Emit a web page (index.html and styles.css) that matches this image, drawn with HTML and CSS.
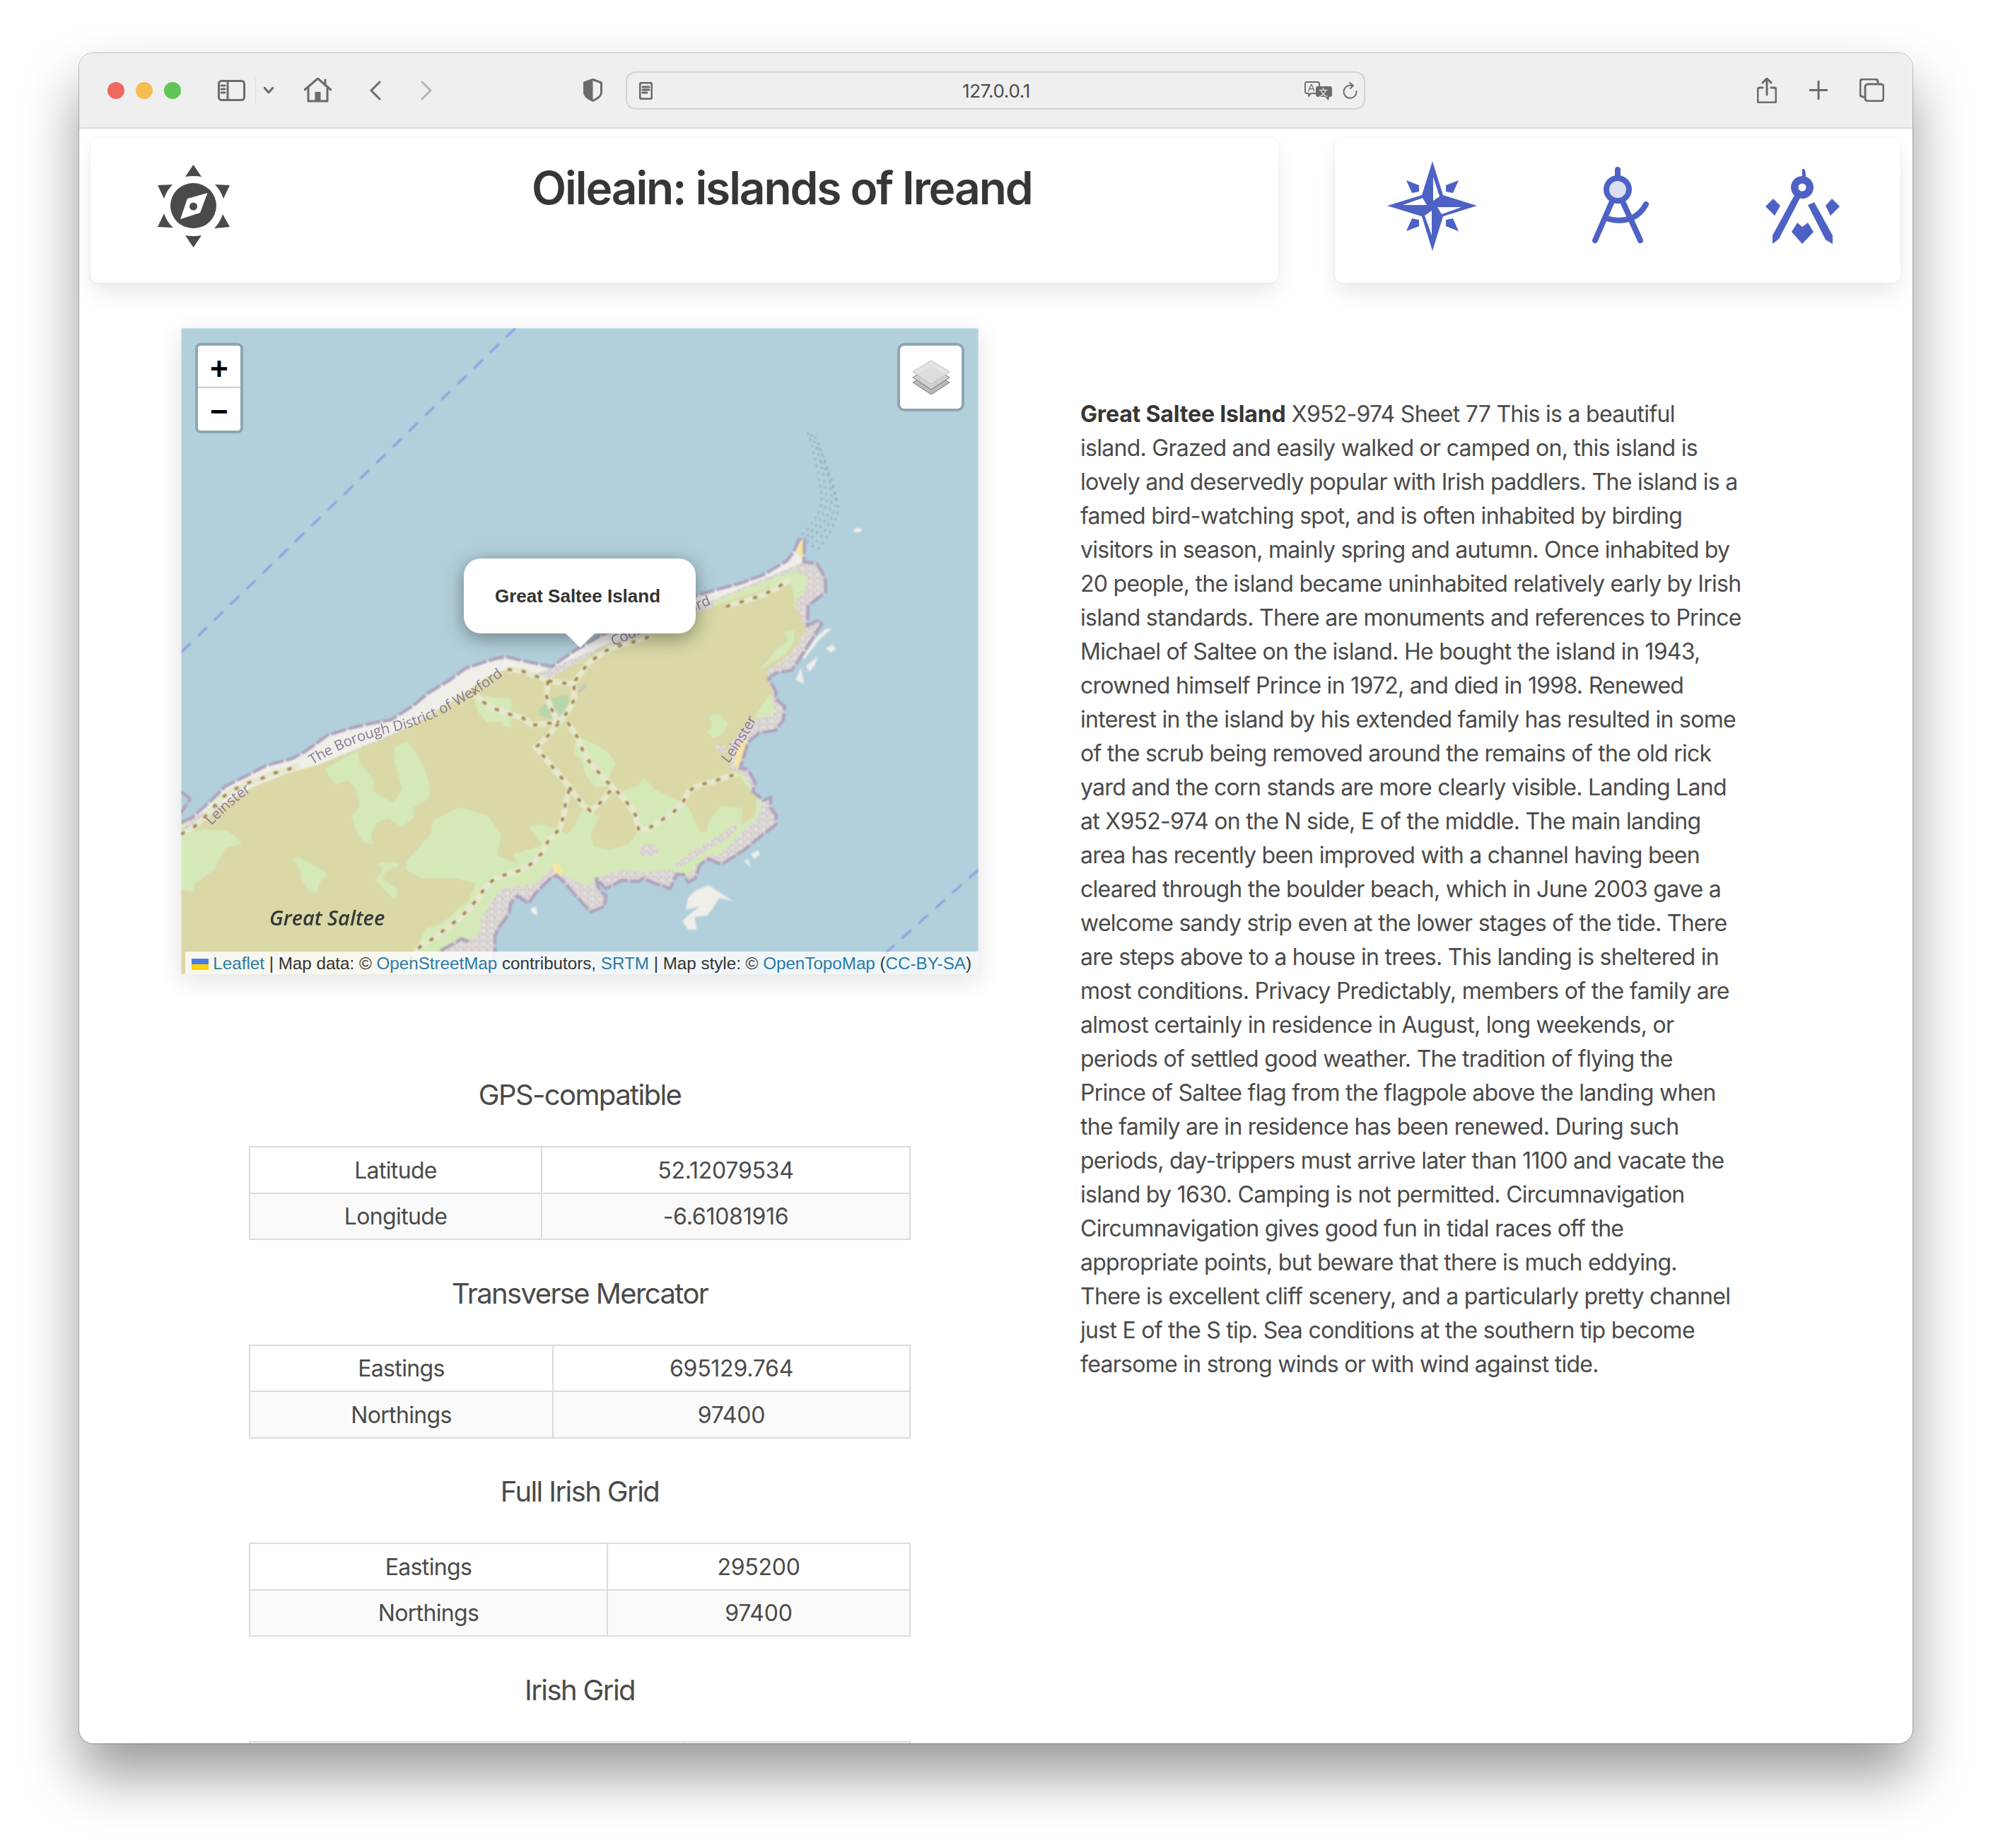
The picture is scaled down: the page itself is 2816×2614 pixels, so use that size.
FILE: index.html
```html
<!DOCTYPE html>
<html lang="en">
<head>
    <meta charset="UTF-8">
    <meta name="viewport" content="width=device-width, initial-scale=1.0">
    <title>Oileain: islands of Ireand</title>
    <link rel="stylesheet" href="styles.css">
</head>
<body>
    <div class="window">
        <!-- Browser toolbar -->
        <header class="toolbar">
            <div class="lights">
                <span class="light light-red"></span>
                <span class="light light-yellow"></span>
                <span class="light light-green"></span>
            </div>
            <svg class="tb-sidebar" width="39" height="30" viewBox="0 0 39 30">
                <rect x="1.5" y="1.5" width="36" height="27" rx="4" class="tb-line"/>
                <path d="M14 2v26M5 8h5M5 13h5M5 18h5" class="tb-line"/>
            </svg>
            <span class="tb-sep"></span>
            <svg class="tb-chevron" width="14" height="9" viewBox="0 0 14 9">
                <path d="M1 1l6 7 6-7" class="tb-line"/>
            </svg>
            <svg class="tb-home" width="39" height="35" viewBox="0 0 39 35">
                <path d="M1 17L19.5 1 38 17M6 13v20h27V13M30 3v8" class="tb-line"/>
                <rect x="15.5" y="20" width="8" height="13" class="tb-fill"/>
            </svg>
            <svg class="tb-back" width="16" height="28" viewBox="0 0 16 28">
                <path d="M14 2L2 14l12 12" class="tb-line"/>
            </svg>
            <svg class="tb-forward" width="16" height="28" viewBox="0 0 16 28">
                <path d="M2 2l12 12L2 26" class="tb-line tb-dim"/>
            </svg>
            <svg class="tb-shield" width="27" height="33" viewBox="0 0 27 33">
                <path d="M13.5 1.5L25.5 6v14q0 6-12 11.5Q1.500 26 1.500 20V6z" class="tb-line"/>
                <path d="M13.500 1.500L1.500 6v14q0 6 12 11.500z" class="tb-fill"/>
            </svg>
            <div class="urlbar">
                <svg class="url-page" width="19" height="25" viewBox="0 0 19 25">
                    <rect x="1" y="1" width="17" height="23" rx="3" class="tb-line"/>
                    <path d="M5 7h9M5 11h9M5 15h6" class="tb-line"/>
                </svg>
                <span class="url-text">127.0.0.1</span>
                <svg class="url-translate" width="39" height="27" viewBox="0 0 39 27">
                    <path d="M3 1h15q3 0 3 3v10q0 3-3 3h-9l-3 4v-4H3q-2 0-2-3V4q0-3 2-3z" class="tb-thin"/>
                    <text x="5" y="14" class="tb-glyph">A</text>
                    <path d="M19 7h17q3 0 3 3v9q0 3-3 3h-1l-1 5-5-5h-10q-3 0-3-3v-9q0-3 3-3z" class="tb-fill"/>
                    <text x="20" y="20" class="tb-glyph tb-glyph-white">文</text>
                </svg>
                <svg class="url-reload" width="21" height="24" viewBox="0 0 21 24">
                    <path d="M14 5.500A9 9 0 1 0 19.500 13M10 1l5 4-4 4" class="tb-thin"/>
                </svg>
            </div>
            <svg class="tb-share" width="28" height="36" viewBox="0 0 28 36">
                <path d="M8 14H4q-3 0-3 3v16q0 2 3 2h20q3 0 3-2V17q0-3-3-3h-4M14 24V2M8 7l6-6 6 6" class="tb-line"/>
            </svg>
            <svg class="tb-plus" width="26" height="27" viewBox="0 0 26 27">
                <path d="M13 0v27M0 13.500h26" class="tb-line"/>
            </svg>
            <svg class="tb-tabs" width="35" height="33" viewBox="0 0 35 33">
                <path d="M7 26H5q-4 0-4-4V5q0-4 4-4h17q4 0 4 4v2" class="tb-line"/>
                <rect x="8" y="8" width="26" height="24" rx="4" class="tb-line"/>
            </svg>
        </header>

        <div class="page">
            <!-- Title and nav cards -->
            <div class="top-row">
                <div class="card brand">
                    <svg class="brand-logo" width="102" height="117" viewBox="0 0 102 117">
                        <path d="M50.500 0L62 17q-11-2-23 0zM50.500 117L39 100q11 2 23 0zM0 29l21-1q-8 8-12 20zM102 29l-21-1q8 8 12 20zM0 88l22 1q-9-8-13-20zM102 88l-22 2q8-8 12-20z" fill="#4a4a4a"/>
                        <ellipse cx="50.500" cy="58" rx="32.500" ry="32" fill="#4a4a4a"/>
                        <path d="M70.500 40L60 68 32 77l10-29z" fill="#fff"/>
                        <circle cx="50.500" cy="59" r="5.500" fill="#4a4a4a"/>
                    </svg>
                    <h1 class="title">Oileain: islands of Ireand</h1>
                </div>
                <nav class="card nav-icons">
                    <svg class="nav-star" width="128" height="127" viewBox="0 0 128 127">
                        <path d="M64 0l15 48 48 15-48 15-15 49-15-49L0 63l49-15z" class="nav-fill"/>
                        <path d="M65 22l9 28-9 6zM71 65h34l-28 10zM63 105V70l-10 7zM22 62h34l-6-10z" fill="#fff"/>
                        <path d="M27 27l18 7v9l-10 2zM101 27l-18 7v9l10 2zM27 99l18-7v-9l-10-2zM101 99l-18-7v-9l10-2z" class="nav-fill"/>
                    </svg>
                    <svg class="nav-dividers" width="81" height="108" viewBox="0 0 81 108">
                        <path d="M36 4v10M28 49L4 104M43 49l25 55M21 73q19 6 36-1 12-6 19-19" fill="none" stroke="#4d62c4" stroke-width="8" stroke-linecap="round"/>
                        <circle cx="36" cy="32" r="16" fill="#dbdff2" stroke="#4d62c4" stroke-width="8"/>
                    </svg>
                    <svg class="nav-masonic" width="107" height="107" viewBox="0 0 107 107">
                        <path d="M53 1h3q2 3 2 11h-5zM42 38l8 4-30 58-9 7V95zM61 52l9-4 26 47v12l-10-6zM12 43l10 10-8 14L1 54zM95 43l11 11-13 13-7-14zM38 90l8-13 7 6 8-6 8 13-16 17z" class="nav-fill"/>
                        <path fill-rule="evenodd" d="M53 11a16 16 0 1 1 0 32 16 16 0 0 1 0-32zm0 10.500a5.500 5.500 0 1 0 0 11 5.500 5.500 0 0 0 0-11z" class="nav-fill"/>
                    </svg>
                </nav>
            </div>

            <div class="content">
                <!-- Left column: map and coordinates -->
                <section class="left-col">
                    <div class="map">
                        <svg class="map-svg" width="1128" height="914" viewBox="0 0 1128 914">
                            <defs>
                                <pattern id="rock" width="11" height="9" patternUnits="userSpaceOnUse">
                                    <rect width="11" height="9" fill="#dfdad7"/>
                                    <path d="M1 2l3 2M7 1l2 3M3 7l3-1" stroke="#c0b9bc" stroke-width="1.500"/>
                                    <path d="M5 3l1 1M9 7l1-1" stroke="#f2efec" stroke-width="1.500"/>
                                </pattern>
                                <path id="coast" d="M0 699L15 693 43 668 63 648 97 631 120 619 157 609 177 598 207 576 240 566 270 559 297 554 330 533 350 516 380 498 403 481 443 468 459 465 500 474 524 479 557 456 597 433 660 405 727 379 754 371 791 361 824 349 857 329 867 316 874 299 882 299 881 331 899 333 911 353 912 373 887 393 886 421 902 413 906 419 887 449 864 484 841 488 831 496 841 513 841 524 854 536 852 554 841 569 817 573 802 586 791 623 802 624 812 643 809 656 824 668 834 664 834 679 842 689 841 703 821 718 797 738 764 759 747 751 734 759 727 779 717 784 711 773 701 773 692 793 666 784 654 778 647 783 624 781 601 793 587 778 592 796 601 803 599 818 579 826 572 818 541 783 531 774 522 779 502 799 491 814 476 803 466 814 464 829 451 846 444 859 444 881 440 914"/>
                            </defs>

                            <g class="map-tiles">
                                <rect width="1128" height="914" fill="#b2d0dc"/>

                                <!-- sea boundary -->
                                <path d="M473 0L0 459M1128 766L963 914" class="sea-line"/>

                                <!-- reef dots -->
                                <path d="M887 149Q900 190 906 240 908 265 874 296" class="reef"/>
                                <path d="M892 152Q908 190 913 240 914 268 880 300" class="reef"/>
                                <path d="M897 155Q916 190 920 240 920 270 886 303" class="reef"/>
                                <path d="M902 170Q922 210 926 240 926 275 892 310" class="reef"/>
                                <path d="M906 190Q924 225 930 255 925 285 897 318" class="reef"/>

                                <!-- offshore shoals -->
                                <path d="M746 788L781 811 761 806 752 821 744 831 727 833 729 851 717 851 709 839 721 828 734 818 714 823 717 806 727 796zM819 744L816 739 806 744 811 751zM796 753L803 752 806 764zM494 821L502 818 504 831 497 828zM911 426L921 424 901 443 881 469 879 466 897 439zM912 453L921 448 927 454 919 459zM901 464L897 476 889 486 884 478zM877 481L881 503 869 498z" class="shoal"/>
                                <ellipse cx="957" cy="286" rx="6" ry="3" class="shoal"/>

                                <!-- island -->
                                <use href="#coast" fill="url(#rock)"/>
                                <path d="M0 699L15 693 43 668 63 648 97 631 120 619 157 609 177 598 207 576 240 566 270 559 297 554 330 533 350 516 380 498 403 481 443 468 459 465 500 474 524 479 557 456 597 433 660 405 727 379 754 371 791 361 824 349 857 329 867 316 874 299 882 299 881 331z" class="beach-pale"/>
                                <path d="M0 718L30 700 65 670 100 650 150 630 200 616 250 596 300 576 350 548 403 516 433 493 460 483 500 489 524 494 557 476 601 449 664 432 724 406 754 393 791 379 857 356 874 343 886 353 882 373 867 389 884 426 864 459 841 476 827 483 831 503 837 516 834 533 814 553 807 556 777 586 777 623 794 629 807 653 821 673 817 693 797 709 781 726 764 743 744 746 727 763 714 776 694 766 657 769 624 766 591 776 577 789 544 776 531 756 519 769 501 786 477 789 454 793 443 806 423 839 430 914 0 914z" class="land"/>

                                <!-- grass -->
                                <path d="M0 718L30 709 67 711 78 721 87 729 63 736 47 766 20 786 17 798 0 794z" class="grass"/>
                                <path d="M203 623L250 598 253 616 273 639 272 656 300 671 313 653 302 613 302 593 320 584 333 603 345 623 352 649 350 666 328 679 330 691 313 706 293 694 277 699 268 718 272 729 260 729 248 713 242 691 253 676 248 653 237 639 218 646z" class="grass"/>
                                <path d="M357 696L393 678 433 689 453 716 447 746 477 759 469 744 487 739 511 731 492 706 507 701 534 709 547 716 557 703 567 683 581 683 591 693 579 716 584 733 607 738 634 729 644 716 642 683 624 663 624 654 644 649 654 636 671 653 704 669 717 676 734 713 744 713 746 699 764 676 794 679 792 703 812 689 814 666 797 643 787 629 794 629 807 653 821 673 817 693 797 709 781 726 764 743 744 746 727 763 714 776 694 766 657 769 624 766 591 776 577 789 544 776 531 756 519 769 501 786 477 789 454 793 443 806 423 839 430 914 320 914 330 881 347 849 367 844 407 809 417 786 387 778 340 778 318 766 320 753 353 716z" class="grass"/>
                                <path d="M157 751L167 748 203 769 205 774 197 783 192 798 182 798 170 779 168 763z" class="grass"/>
                                <path d="M278 756L307 756 308 761 290 768 285 779 295 786 307 794 302 809 275 781 285 766z" class="grass"/>
                                <path d="M413 519L443 523 467 524 468 546 467 566 457 563 453 556 433 558 420 543z" class="grass"/>
                                <path d="M557 589L564 579 591 591 607 603 614 616 607 633 604 643 601 649 584 649 571 629 567 609 556 603z" class="grass"/>
                                <path d="M747 549L761 546 774 559 767 573 752 581 744 571 752 563z" class="grass"/>
                                <path d="M754 386L867 343 886 353 882 373 867 389 872 403 864 366 857 359 754 393z" class="grass"/>
                                <path d="M854 429L867 428 867 443 857 459 837 473 817 484 830 470 842 455 858 443z" class="grass"/>
                                <path d="M811 549L834 516 837 529 841 543 817 553z" class="grass"/>
                                <path d="M507 539L524 523 544 519 551 529 544 543 524 553 507 548z" class="wood"/>

                                <!-- inland rock -->
                                <path d="M697 759L727 738 764 716 787 699 786 709 771 723 737 743 707 763z" fill="url(#rock)"/>
                                <ellipse cx="662" cy="739" rx="14" ry="9" fill="url(#rock)"/>
                                <path d="M756 590L768 590 772 600 760 602z" fill="url(#rock)"/>
                                <path d="M367 881L397 864 407 868 430 846 443 853 445 881 445 914 367 914z" fill="url(#rock)"/>
                                <path d="M367 881L397 864 407 868" class="coast-edge"/>
                                <path d="M561 513L572 503 574 507 564 516zM531 553L542 544 544 548 534 556z" fill="#c7c3c0"/>

                                <!-- beaches -->
                                <path d="M874 301L882 303 879 326 871 319zM797 581L802 586 791 613 786 623 782 616 787 596zM527 756L534 758 541 769 536 776 526 769zM0 703L12 698 0 711z" fill="#f6e6a0"/>

                                <use href="#coast" class="coast-edge"/>
                                <path d="M0 656L13 666 0 686" fill="#d5e9b8" class="coast-edge"/>

                                <!-- tracks -->
                                <g class="track-base">
                                    <path d="M0 716L17 707 32 693 45 679 58 664 75 653 93 644 112 638 130 630 150 625 168 618M462 483L482 485 501 492 519 499 539 502 554 503 564 490 576 474 591 463 607 453 644 443 664 436M771 394L807 383 826 376 844 367 861 355"/>
                                    <path d="M519 499L517 521 524 539 534 558M556 506L556 526 546 544 526 569 512 584 502 593 519 613 531 628 545 644 557 660 569 675 579 683 597 668 610 651"/>
                                    <path d="M413 514L427 529 445 539 463 546 483 551 497 562 519 559 534 558M547 558L561 579 568 597 578 614 591 629 605 644 619 658 632 673 643 689 647 709 661 708 678 697 695 686 709 673 718 655 733 646 752 642 771 635 787 631"/>
                                    <path d="M549 653L544 671 541 691 535 709 520 724 512 741 498 756 481 767 462 772 443 779 429 793 418 809 405 824 390 838 375 849 358 863 342 871 333 881 310 914"/>
                                </g>
                                <g class="track-dots">
                                    <path d="M0 716L17 707 32 693 45 679 58 664 75 653 93 644 112 638 130 630 150 625 168 618M462 483L482 485 501 492 519 499 539 502 554 503 564 490 576 474 591 463 607 453 644 443 664 436M771 394L807 383 826 376 844 367 861 355"/>
                                    <path d="M519 499L517 521 524 539 534 558M556 506L556 526 546 544 526 569 512 584 502 593 519 613 531 628 545 644 557 660 569 675 579 683 597 668 610 651"/>
                                    <path d="M413 514L427 529 445 539 463 546 483 551 497 562 519 559 534 558M547 558L561 579 568 597 578 614 591 629 605 644 619 658 632 673 643 689 647 709 661 708 678 697 695 686 709 673 718 655 733 646 752 642 771 635 787 631"/>
                                    <path d="M549 653L544 671 541 691 535 709 520 724 512 741 498 756 481 767 462 772 443 779 429 793 418 809 405 824 390 838 375 849 358 863 342 871 333 881 310 914"/>
                                </g>
                            </g>

                            <!-- map labels -->
                            <g class="map-text">
                                <path id="label-borough" d="M186 618Q240 584 305 570T466 484" fill="none"/>
                                <path id="label-county" d="M612 450Q680 420 756 388" fill="none"/>
                                <path id="label-west" d="M43 704Q70 675 106 650" fill="none"/>
                                <path id="label-east" d="M774 616Q795 590 816 550" fill="none"/>
                                <text class="map-label"><textPath href="#label-borough">The Borough District of Wexford</textPath></text>
                                <text class="map-label"><textPath href="#label-county">County Wexford</textPath></text>
                                <text class="map-label"><textPath href="#label-west">Leinster</textPath></text>
                                <text class="map-label"><textPath href="#label-east">Leinster</textPath></text>
                                <text x="125" y="845" class="map-place">Great Saltee</text>
                            </g>
                        </svg>

                        <div class="map-zoom">
                            <a class="zoom-btn">+</a>
                            <a class="zoom-btn">−</a>
                        </div>
                        <div class="map-layers">
                            <svg width="54" height="50" viewBox="0 0 54 50">
                                <path d="M27 16L53 32 27 49 1 32z" fill="#b9b9b9" stroke="#777" stroke-width="1"/>
                                <path d="M27 9L53 25 27 42 1 25z" fill="#cfcfcf" stroke="#777" stroke-width="1"/>
                                <path d="M27 1L53 17 27 34 1 17z" fill="#e4e4e4" stroke="#bbb" stroke-width="1"/>
                                <path d="M27 9L46 20 27 32 8 20z" fill="#dcdcdc"/>
                            </svg>
                        </div>
                        <div class="map-popup">Great Saltee Island</div>
                        <div class="map-attribution">
                            <svg class="flag" width="24" height="16" viewBox="0 0 24 16">
                                <rect width="24" height="8" fill="#4c7be1"/>
                                <rect y="8" width="24" height="8" fill="#ffd500"/>
                            </svg>
                            <a>Leaflet</a> | Map data: © <a>OpenStreetMap</a> contributors, <a>SRTM</a> | Map style: © <a>OpenTopoMap</a> (<a>CC-BY-SA</a>)
                        </div>
                    </div>

                    <h2 class="subtitle first">GPS-compatible</h2>
                    <table class="coords">
                        <colgroup><col class="col-gps"><col></colgroup>
                        <tr><td>Latitude</td><td>52.12079534</td></tr>
                        <tr><td>Longitude</td><td>-6.61081916</td></tr>
                    </table>

                    <h2 class="subtitle">Transverse Mercator</h2>
                    <table class="coords">
                        <colgroup><col class="col-tm"><col></colgroup>
                        <tr><td>Eastings</td><td>695129.764</td></tr>
                        <tr><td>Northings</td><td>97400</td></tr>
                    </table>

                    <h2 class="subtitle">Full Irish Grid</h2>
                    <table class="coords">
                        <colgroup><col class="col-full"><col></colgroup>
                        <tr><td>Eastings</td><td>295200</td></tr>
                        <tr><td>Northings</td><td>97400</td></tr>
                    </table>

                    <h2 class="subtitle">Irish Grid</h2>
                    <table class="coords">
                        <colgroup><col class="col-irish"><col></colgroup>
                        <tr><td>Sheet</td><td>X952</td></tr>
                        <tr><td>Square</td><td>974</td></tr>
                    </table>
                </section>

                <!-- Right column: description -->
                <section class="right-col">
                    <p><strong>Great Saltee Island</strong> X952-974 Sheet 77 This is a beautiful island. Grazed and easily walked or camped on, this island is lovely and deservedly popular with Irish paddlers. The island is a famed bird-watching spot, and is often inhabited by birding visitors in season, mainly spring and autumn. Once inhabited by 20 people, the island became uninhabited relatively early by Irish island standards. There are monuments and references to Prince Michael of Saltee on the island. He bought the island in 1943, crowned himself Prince in 1972, and died in 1998. Renewed interest in the island by his extended family has resulted in some of the scrub being removed around the remains of the old rick yard and the corn stands are more clearly visible. Landing Land at X952-974 on the N side, E of the middle. The main landing area has recently been improved with a channel having been cleared through the boulder beach, which in June 2003 gave a welcome sandy strip even at the lower stages of the tide. There are steps above to a house in trees. This landing is sheltered in most conditions. Privacy Predictably, members of the family are almost certainly in residence in August, long weekends, or periods of settled good weather. The tradition of flying the Prince of Saltee flag from the flagpole above the landing when the family are in residence has been renewed. During such periods, day-trippers must arrive later than 1100 and vacate the island by 1630. Camping is not permitted. Circumnavigation Circumnavigation gives good fun in tidal races off the appropriate points, but beware that there is much eddying. There is excellent cliff scenery, and a particularly pretty channel just E of the S tip. Sea conditions at the southern tip become fearsome in strong winds or with wind against tide.</p>
                </section>
            </div>
        </div>
    </div>
</body>
</html>
```

FILE: styles.css
```css
/* Reset and Base Styles */
* {
    margin: 0;
    padding: 0;
    box-sizing: border-box;
}

body {
    background-color: #fff;
    color: #4a4a4a;
    font-family: Inter, "Liberation Sans", sans-serif;
    font-size: 32px;
    line-height: 1.5;
    height: 2614px;
    overflow: hidden;
    padding: 75px 0 0 112px;
}

/* Browser Window */
.window {
    width: 2593px;
    height: 2391px;
    background-color: #fff;
    border-radius: 20px;
    overflow: hidden;
    box-shadow: 0 45px 80px rgba(0, 0, 0, 0.4), 0 0 0 1px rgba(0, 0, 0, 0.22);
}

.toolbar {
    height: 107px;
    background-color: #efefef;
    border-bottom: 2px solid #dcdcdc;
    display: flex;
    align-items: center;
    padding-left: 40px;
}

.lights {
    display: flex;
    gap: 16px;
}

.light {
    width: 24px;
    height: 24px;
    border-radius: 50%;
}

.light-red { background-color: #ee6a5f; }
.light-yellow { background-color: #f5bd4f; }
.light-green { background-color: #61c454; }

.tb-line {
    fill: none;
    stroke: #6b6b6b;
    stroke-width: 3;
    stroke-linecap: round;
    stroke-linejoin: round;
}

.tb-thin {
    fill: none;
    stroke: #6f6f6f;
    stroke-width: 2;
    stroke-linecap: round;
    stroke-linejoin: round;
}

.tb-dim { stroke: #b5b5b5; }
.tb-fill { fill: #6b6b6b; }

.tb-glyph {
    font-family: "Liberation Sans", sans-serif;
    font-size: 14px;
    fill: #6b6b6b;
}

.tb-glyph-white {
    font-family: "Noto Sans CJK SC", sans-serif;
    font-size: 13px;
    fill: #efefef;
}

.tb-sidebar { margin-left: 52px; }
.tb-chevron { margin-left: 11px; }
.tb-home { margin-left: 43px; }
.tb-back { margin-left: 54px; }
.tb-forward { margin-left: 56px; }
.tb-shield { margin-left: 214px; }
.tb-share { margin-left: 554px; }
.tb-plus { margin-left: 46px; }
.tb-tabs { margin-left: 45px; }

.tb-sep {
    width: 1px;
    height: 36px;
    margin-left: 14px;
    background-color: #dcdcdc;
}

.urlbar {
    width: 1046px;
    height: 54px;
    margin: 1px 0 0 33px;
    border: 2px solid #d2d2d2;
    border-radius: 14px;
    display: flex;
    align-items: center;
    padding: 0 9px 0 17px;
}

.url-text {
    flex: 1;
    text-align: center;
    font-size: 26px;
    color: #4a4a4a;
    letter-spacing: -0.3px;
    padding-left: 50px;
}

.url-translate { margin-right: 15px; }

/* Page Content */
.page {
    padding: 13px 17px 0 16px;
}

.top-row {
    display: flex;
    justify-content: space-between;
}

.card {
    height: 205px;
    background-color: #fff;
    border-radius: 12px;
    box-shadow: 0 16px 32px -4px rgba(10, 10, 10, 0.1), 0 0 0 2px rgba(10, 10, 10, 0.02);
}

.brand {
    width: 1680px;
    display: flex;
    align-items: flex-start;
    padding: 38px 0 0 95px;
}

.title {
    margin: -3px 0 0 427px;
    font-size: 64px;
    font-weight: 600;
    letter-spacing: -2.1px;
    line-height: 1.125;
    color: #363636;
}

.nav-icons {
    width: 800px;
    display: flex;
    align-items: flex-start;
    padding: 33px 0 0 74px;
}

.nav-fill { fill: #4d62c4; }
.nav-dividers { margin: 8px 0 0 162px; }
.nav-masonic { margin: 10px 0 0 163px; }

.content {
    display: flex;
    margin-top: 64px;
}

.left-col {
    width: 1128px;
    margin-left: 128px;
}

.right-col {
    width: 936px;
    margin-left: 144px;
    padding-top: 98px;
    letter-spacing: -0.72px;
}

strong {
    color: #363636;
    font-weight: 700;
    letter-spacing: -0.16px;
}

/* Map */
.map {
    position: relative;
    width: 1128px;
    height: 914px;
    overflow: hidden;
    box-shadow: 0 8px 32px rgba(0, 0, 0, 0.12);
}

.map-svg {
    display: block;
}

.map-tiles {
    filter: blur(1px);
}

.map-text {
    filter: blur(0.4px);
}

.sea-line {
    fill: none;
    stroke: #7c93e4;
    stroke-width: 2.5;
    stroke-dasharray: 18 14;
}

.reef {
    fill: none;
    stroke: #8fa3ad;
    stroke-width: 2.5;
    stroke-linecap: round;
    stroke-dasharray: 0.5 9;
}

.shoal { fill: #efeee8; }
.beach-pale { fill: #efeee8; }
.land { fill: #d9d8a6; }
.grass { fill: #d5e9b8; }
.wood { fill: #b7d6a9; }

.coast-edge {
    fill: none;
    stroke: #aea3bc;
    stroke-width: 4.5;
    stroke-dasharray: 22 3;
}

.track-base path {
    fill: none;
    stroke: #e6e8cd;
    stroke-width: 8;
}

.track-dots path {
    fill: none;
    stroke: #a0804a;
    stroke-width: 4;
    stroke-dasharray: 6 14;
}

.map-label {
    font-family: "Open Sans", sans-serif;
    font-size: 20px;
    fill: #8a7796;
}

.map-place {
    font-family: "Open Sans", sans-serif;
    font-style: italic;
    font-size: 29px;
    font-weight: 600;
    fill: #363636;
}

.map-zoom {
    position: absolute;
    top: 21px;
    left: 20px;
    width: 68px;
    border: 4px solid rgba(0, 0, 0, 0.2);
    border-radius: 8px;
    background-clip: padding-box;
}

.zoom-btn {
    display: block;
    height: 60px;
    padding-top: 14px;
    background-color: #fff;
    color: #000;
    text-align: center;
    font-family: "Liberation Mono", monospace;
    font-weight: 700;
    font-size: 44px;
    line-height: 44px;
}

.zoom-btn:first-child {
    border-bottom: 2px solid #ccc;
    border-radius: 4px 4px 0 0;
}

.zoom-btn:last-child {
    border-radius: 0 0 4px 4px;
}

.map-layers {
    position: absolute;
    top: 21px;
    left: 1013px;
    width: 95px;
    height: 97px;
    border: 4px solid rgba(0, 0, 0, 0.2);
    border-radius: 10px;
    background-color: #fff;
    background-clip: padding-box;
    display: flex;
    justify-content: center;
    padding-top: 20px;
}

.map-popup {
    position: absolute;
    top: 326px;
    left: 400px;
    width: 328px;
    height: 106px;
    background-color: #fff;
    border-radius: 24px;
    box-shadow: 0 6px 28px rgba(0, 0, 0, 0.4);
    color: #333;
    font-family: "Liberation Sans", sans-serif;
    font-weight: 700;
    font-size: 26px;
    text-align: center;
    line-height: 106px;
    padding-right: 6px;
}

.map-popup::after {
    content: '';
    position: absolute;
    top: 106px;
    left: 144px;
    width: 41px;
    height: 20px;
    background-color: #fff;
    clip-path: polygon(0 0, 100% 0, 50% 100%);
}

.map-attribution {
    position: absolute;
    right: 0;
    bottom: 0;
    height: 32px;
    padding: 0 10px 0 9px;
    background-color: rgba(255, 255, 255, 0.8);
    color: #333;
    font-family: "Liberation Sans", sans-serif;
    font-size: 24.2px;
    line-height: 34px;
    white-space: nowrap;
}

.map-attribution a {
    color: #2b7aa8;
}

.flag {
    vertical-align: -1px;
}

/* Coordinate Tables */
.subtitle {
    font-size: 40px;
    font-weight: 400;
    letter-spacing: -1.6px;
    line-height: 45px;
    color: #4a4a4a;
    text-align: center;
    margin: 52.5px 0 50px;
}

.subtitle.first {
    margin-top: 148px;
}

.coords {
    width: 936px;
    margin: 0 auto;
    border-collapse: collapse;
    table-layout: fixed;
}

.coords td {
    height: 65.5px;
    border: 2px solid #dbdbdb;
    text-align: center;
    padding: 2px 24px 0;
    letter-spacing: -0.65px;
}

.coords td + td {
    letter-spacing: -0.25px;
}

.coords tr:nth-child(even) td {
    background-color: #fafafa;
}

.col-gps { width: 413px; }
.col-tm { width: 429px; }
.col-full { width: 506px; }
.col-irish { width: 615px; }
```
